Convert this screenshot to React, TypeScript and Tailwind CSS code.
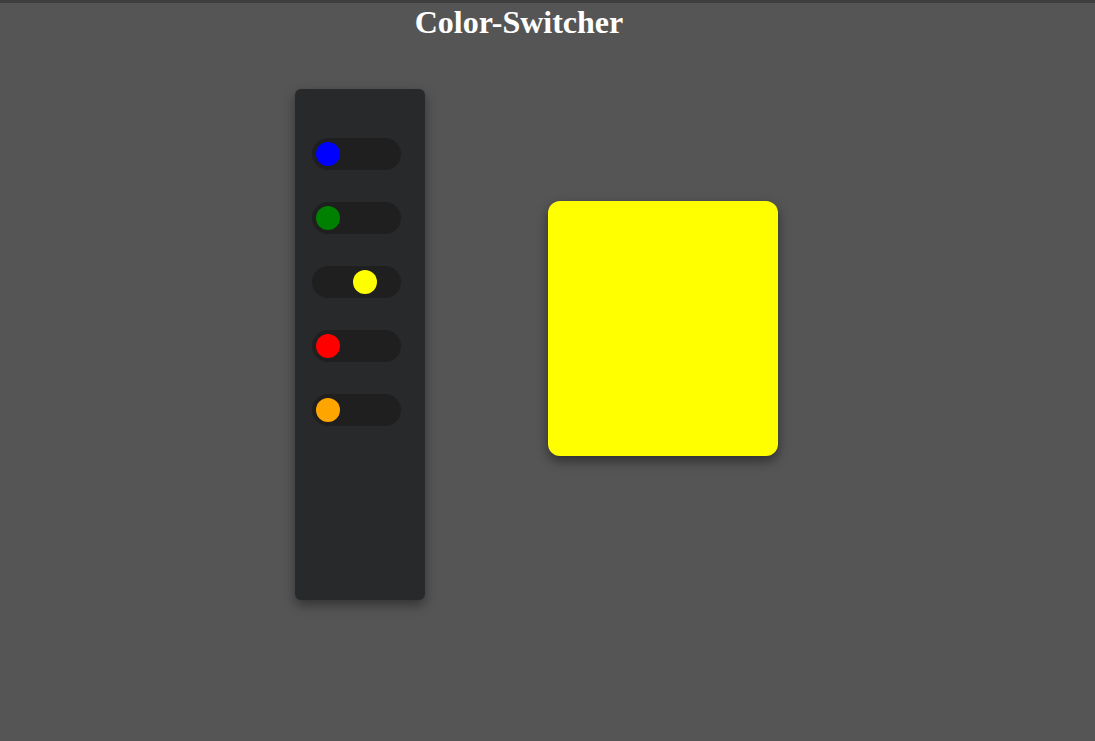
import { useState } from "react";

const COLORS = [
  { name: "blue", hex: "#0000ff" },
  { name: "green", hex: "#008000" },
  { name: "yellow", hex: "#ffff00" },
  { name: "red", hex: "#ff0000" },
  { name: "orange", hex: "#ffa500" },
];

export default function App() {
  const [active, setActive] = useState("yellow");
  const current = COLORS.find((c) => c.name === active)?.hex ?? "#ffff00";

  return (
    <div className="min-h-[741px] border-t-[3px] border-[#3e3e3e] bg-[#555555] font-['Liberation_Serif',serif]">
      <div className="flex w-[1038px] justify-center pt-px">
        <h1 className="text-[32px] font-bold leading-[37px] text-white">Color-Switcher</h1>
      </div>

      <div className="mt-[48px] flex items-start pl-[295px]">
        <div className="flex h-[511px] w-[130px] flex-col gap-[32px] rounded-md bg-[#28292b] pt-[49px] pl-[17px] shadow-[0_5px_12px_rgba(0,0,0,0.4)]">
          {COLORS.map((c) => {
            const on = c.name === active;
            return (
              <button
                key={c.name}
                type="button"
                onClick={() => setActive(c.name)}
                className="flex h-[32px] w-[89px] items-center rounded-full bg-[#1f1f1f] px-[4px]"
                aria-label={c.name}
              >
                <span
                  className={`h-[24px] w-[24px] rounded-full ${on ? "translate-x-[37px]" : ""}`}
                  style={{ backgroundColor: c.hex }}
                />
              </button>
            );
          })}
        </div>

        <div
          className="mt-[112px] ml-[123px] h-[255px] w-[230px] rounded-xl shadow-[0_5px_12px_rgba(0,0,0,0.45)]"
          style={{ backgroundColor: current }}
        />
      </div>
    </div>
  );
}
